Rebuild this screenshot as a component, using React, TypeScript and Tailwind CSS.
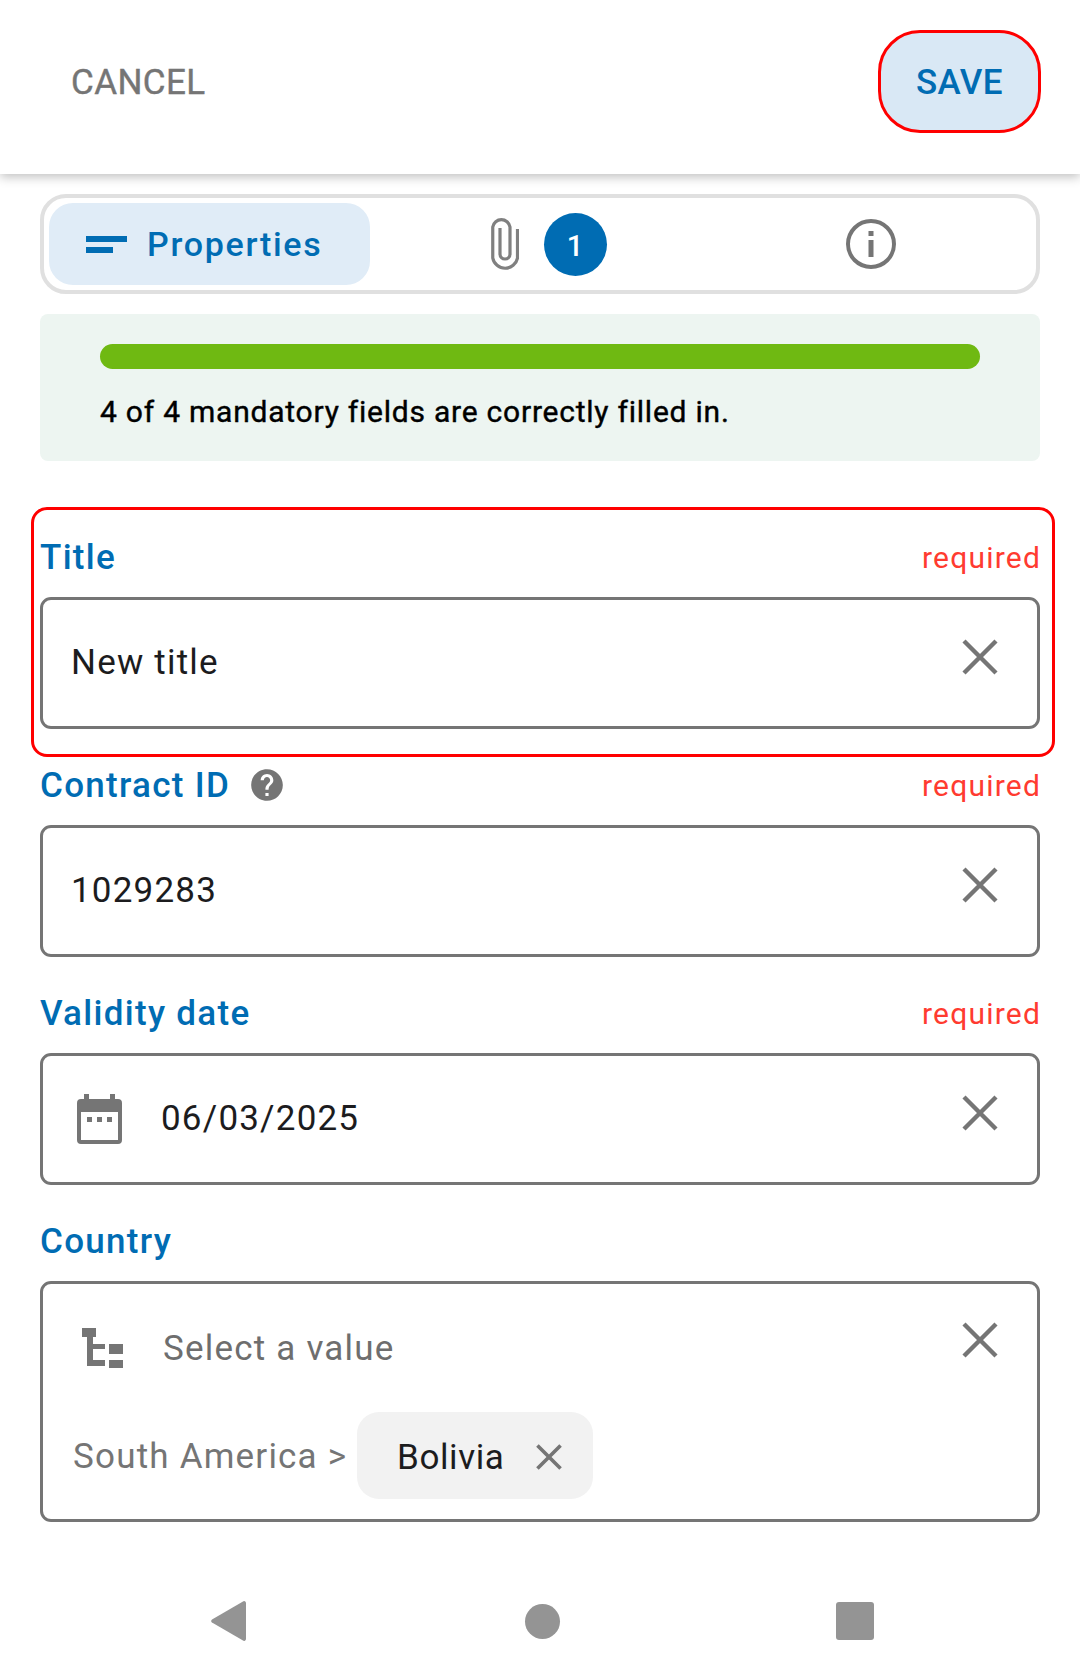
import { ReactNode } from "react";

const CloseIcon = ({ size = 36, width = 4.4 }: { size?: number; width?: number }) => (
  <svg width={size} height={size} viewBox="0 0 36 36" fill="none" stroke="#757575" strokeWidth={width}>
    <path d="M2 2l32 32M34 2L2 34" />
  </svg>
);

function Field({
  label,
  required,
  help,
  outlined,
  children,
}: {
  label: string;
  required?: boolean;
  help?: boolean;
  outlined?: boolean;
  children: ReactNode;
}) {
  return (
    <div className="relative pt-[32px]">
      {/* red highlight around the field */}
      {outlined && (
        <div className="absolute top-[6px] bottom-[-28px] left-[-9px] right-[-15px] rounded-[16px] border-[3px] border-[#ff0000]" />
      )}
      <div className="flex h-[48px] items-center justify-between mb-[16px]">
        <div className="flex items-center gap-[18px]">
          <span className="pt-[2px] text-[35px] font-medium tracking-[1.3px] text-[#006cb3]">{label}</span>
          {help && (
            <svg width="38" height="38" viewBox="0 0 24 24" fill="#757575">
              <path d="M12 2C6.48 2 2 6.48 2 12s4.48 10 10 10 10-4.48 10-10S17.52 2 12 2zm1 17h-2v-2h2v2zm2.07-7.75l-.9.92C13.45 12.9 13 13.5 13 15h-2v-.5c0-1.1.45-2.1 1.17-2.83l1.24-1.26c.37-.36.59-.86.59-1.41 0-1.1-.9-2-2-2s-2 .9-2 2H8c0-2.21 1.79-4 4-4s4 1.79 4 4c0 .88-.36 1.68-.93 2.25z" />
            </svg>
          )}
        </div>
        {required && <span className="mr-[-1px] text-[30px] tracking-[1.2px] text-[#ff3b30]">required</span>}
      </div>
      {children}
    </div>
  );
}

function TextBox({ icon, value }: { icon?: ReactNode; value: string }) {
  return (
    <div className="flex h-[132px] items-center rounded-[11px] border-[3px] border-[#757575] pl-[28px] pr-[39px]">
      {icon}
      <span className="flex-1 pt-[1px] text-[35px] tracking-[1.2px] text-[#1c1c1e]">{value}</span>
      <div className="mb-[12px]">
        <CloseIcon />
      </div>
    </div>
  );
}

export default function App() {
  return (
    <div className="min-h-[1663px] bg-white font-[Roboto,sans-serif]">
      {/* Header */}
      <header className="flex h-[174px] items-center justify-between pb-[12px] pl-[71px] pr-[39px] shadow-[0_3px_10px_rgba(0,0,0,0.25)]">
        <span className="pt-[4px] text-[35px] font-normal tracking-[0.4px] text-[#757575] [-webkit-text-stroke:0.4px_#757575]">
          CANCEL
        </span>
        <button className="flex h-[103px] w-[163px] items-center justify-center rounded-[42px] border-[3px] border-[#ff0000] bg-[#d9e8f5] pt-[4px] text-[35px] font-medium tracking-[0.4px] text-[#006cb3]">
          SAVE
        </button>
      </header>

      <main className="px-[40px]">
        {/* Tabs */}
        <div className="mt-[20px] grid h-[100px] grid-cols-[321px_358px_1fr] items-center rounded-[26px] border-[4px] border-[#e0e0e0] pl-[5px]">
          <div className="flex h-[82px] items-center rounded-[24px] bg-[#e0ecf7] pl-[37px]">
            <svg width="41" height="17" viewBox="0 0 41 17" fill="#006cb3" className="mr-[20px]">
              <rect width="41" height="6" />
              <rect y="11" width="27" height="6" />
            </svg>
            <span className="pt-[1px] text-[34px] font-medium tracking-[1.7px] text-[#006cb3]">Properties</span>
          </div>
          <div className="flex items-center justify-center gap-[25px] pr-[1px]">
            <svg width="28" height="55" viewBox="0 0 28 55" fill="none" stroke="#808080" strokeWidth="3.2">
              <path d="M9 11V37A5 5 0 0 0 19 37V10A8.75 8.75 0 0 0 1.75 10V41A12.6 12.6 0 0 0 26.5 41V12" />
            </svg>
            <div className="flex h-[63px] w-[63px] items-center justify-center rounded-full bg-[#006cb3] pt-[6px] text-[29px] font-medium text-white">
              1
            </div>
          </div>
          <div className="flex justify-center pr-[23px]">
            <svg width="50" height="50" viewBox="0 0 50 50" fill="none">
              <circle cx="25" cy="25" r="23" stroke="#757575" strokeWidth="4" />
              <rect x="22.5" y="12" width="5" height="5" fill="#757575" />
              <rect x="22.5" y="21" width="5" height="17" fill="#757575" />
            </svg>
          </div>
        </div>

        {/* Mandatory fields progress */}
        <div className="mt-[20px] h-[147px] rounded-[8px] bg-[#edf5f1] px-[60px] pt-[30px]">
          <div className="h-[25px] rounded-full bg-[#6fb912]" />
          <p className="mt-[20px] text-[30px] font-normal tracking-[0.77px] text-black [-webkit-text-stroke:0.4px_black]">
            4 of 4 mandatory fields are correctly filled in.
          </p>
        </div>

        <div className="mt-[40px]">
          <Field label="Title" required outlined>
            <TextBox value="New title" />
          </Field>
          <Field label="Contract ID" required help>
            <TextBox value="1029283" />
          </Field>
          <Field label="Validity date" required>
            <TextBox
              value="06/03/2025"
              icon={
                <svg width="45" height="50" viewBox="0 0 45 50" fill="#757575" className="mr-[39px] ml-[6px]">
                  <path
                    fillRule="evenodd"
                    d="M7 0h5v5h21V0h5v5h3a4 4 0 0 1 4 4v37a4 4 0 0 1-4 4H4a4 4 0 0 1-4-4V9a4 4 0 0 1 4-4h3zM4 18v28h37V18z"
                  />
                  <rect x="10" y="23" width="5" height="5" />
                  <rect x="20" y="23" width="5" height="5" />
                  <rect x="30" y="23" width="5" height="5" />
                </svg>
              }
            />
          </Field>
          <Field label="Country">
            <div className="h-[241px] rounded-[11px] border-[3px] border-[#757575] pl-[30px] pr-[39px]">
              <div className="flex h-[128px] items-center">
                <svg width="41" height="40" viewBox="0 0 41 40" fill="#757575" className="ml-[9px] mr-[40px]">
                  <rect width="14" height="9" />
                  <rect x="5" y="9" width="6" height="29" />
                  <rect x="5" y="16" width="18" height="5" />
                  <rect x="5" y="32" width="18" height="6" />
                  <rect x="27" y="16" width="14" height="10" />
                  <rect x="27" y="32" width="14" height="8" />
                </svg>
                <span className="flex-1 pt-[2px] text-[35px] tracking-[1.2px] text-[#6e6e6e]">Select a value</span>
                <div className="mb-[16px]">
                  <CloseIcon />
                </div>
              </div>
              <div className="flex items-center">
                <span className="w-[284px] pt-[4px] text-[35px] tracking-[1.2px] text-[#757575]">South America &gt;</span>
                <div className="flex h-[87px] w-[236px] items-center rounded-[22px] bg-[#f2f2f2] pl-[40px]">
                  <span className="w-[139px] pt-[6px] text-[35px] tracking-[0.6px] text-[#1c1c1e]">Bolivia</span>
                  <div className="pt-[2px]">
                    <CloseIcon size={26} width={5} />
                  </div>
                </div>
              </div>
            </div>
          </Field>
        </div>
      </main>

      {/* Android nav bar */}
      <nav className="mt-[79px] flex items-center pl-[211px]">
        <svg width="35" height="40" viewBox="0 0 35 40" fill="#949494">
          <path d="M35 2v36a2 2 0 0 1-3 1.6L1 21.6a2 2 0 0 1 0-3.2L32 .4A2 2 0 0 1 35 2z" />
        </svg>
        <div className="ml-[279px] h-[35px] w-[35px] rounded-full bg-[#949494]" />
        <div className="ml-[276px] h-[38px] w-[38px] rounded-[3px] bg-[#949494]" />
      </nav>
    </div>
  );
}
